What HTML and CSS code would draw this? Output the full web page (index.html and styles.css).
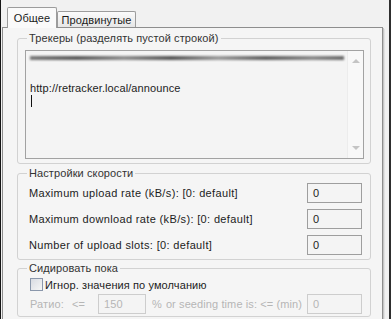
FILE: index.html
```html
<!DOCTYPE html>
<html lang="ru">
<head>
    <meta charset="UTF-8">
    <title>Настройки торрента</title>
    <link rel="stylesheet" href="styles.css">
</head>
<body>
  <div class="window">
    <!-- Tabs -->
    <div class="tabs">
      <div class="tab active">Общее</div>
      <div class="tab">Продвинутые</div>
    </div>

    <div class="panel">
      <!-- Trackers -->
      <fieldset class="group trackers">
        <legend>Трекеры (разделять пустой строкой)</legend>
        <div class="memo">
          <div class="memo-text">
            <div class="line"><span class="smudge"></span></div>
            <div class="line"></div>
            <div class="line">http://retracker.local/announce</div>
            <div class="line"><span class="caret"></span></div>
          </div>
          <div class="vscroll">
            <span class="arrow up"></span>
            <span class="arrow down"></span>
          </div>
        </div>
      </fieldset>

      <!-- Speed -->
      <fieldset class="group speed">
        <legend>Настройки скорости</legend>
        <div class="row">
          <span class="label">Maximum upload rate (kB/s): [0: default]</span>
          <span class="field">0</span>
        </div>
        <div class="row">
          <span class="label">Maximum download rate (kB/s): [0: default]</span>
          <span class="field">0</span>
        </div>
        <div class="row">
          <span class="label">Number of upload slots: [0: default]</span>
          <span class="field">0</span>
        </div>
      </fieldset>

      <!-- Seeding -->
      <fieldset class="group seed">
        <legend>Сидировать пока</legend>
        <label class="check"><span class="box"></span>Игнор. значения по умолчанию</label>
        <div class="ratio-row">
          <span class="r-label">Ратио:</span>
          <span class="r-op">&lt;=</span>
          <span class="field small">150</span>
          <span class="r-pct">%</span>
          <span class="r-time">or seeding time is: &lt;= (min)</span>
          <span class="field">0</span>
        </div>
      </fieldset>
    </div>
  </div>
</body>
</html>
```

FILE: styles.css
```css
body {
    margin: 0;
    background-color: #f1f1f1;
    font-family: "Liberation Sans", Arial, sans-serif;
    font-size: 11px;
    letter-spacing: 0.1px;
    color: #1c1c1c;
}

.window {
    width: 391px;
    height: 319px;
    box-sizing: border-box;
    overflow: hidden;
    border-left: 1px solid #151515;
    border-right: 2px solid #2e2e2e;
    padding: 7px 6px 0 1px;
}

/* Tabs */
.tabs {
    display: flex;
    align-items: flex-end;
    height: 20px;
    margin-left: 5px;
}

.tab {
    box-sizing: border-box;
    display: flex;
    align-items: center;
    justify-content: center;
    height: 16px;
    width: 79px;
    border: 1px solid #9c9c9c;
    border-bottom: none;
    border-radius: 2px 2px 0 0;
    background: linear-gradient(#fbfbfb, #e6e6e6);
}

.tab.active {
    position: relative;
    z-index: 1;
    width: 50px;
    height: 21px;
    margin-bottom: -1px;
    padding-bottom: 1px;
    background: #fafafa;
}

/* Panel */
.panel {
    height: 300px;
    border: 1px solid #8e8e8e;
    background-color: #f5f5f5;
    box-shadow: 1px 1px 0 #c6c6c6, 2px 2px 0 #e2e2e2;
    padding: 4px 11px 0 14px;
}

.group {
    margin: 0;
    min-width: 0;
    border: 1px solid #d2d2d2;
    border-radius: 3px;
}

.group legend {
    margin-left: 2px;
    padding: 0 2px;
    line-height: 13px;
    color: #333333;
}

.trackers {
    padding: 5px 6px 4px 7px;
}

.speed {
    margin-top: 3px;
    padding: 3px 8px 4px 7px;
}

.seed {
    margin-top: 2px;
    padding: 3px 8px 2px 7px;
}

/* Trackers memo */
.memo {
    display: flex;
    height: 109px;
    box-sizing: border-box;
    border: 1px solid #a2a2a2;
    background-color: #f4f4f4;
}

.memo-text {
    flex: 1;
    padding: 1px 0 0 4px;
}

.line {
    height: 13px;
    line-height: 13px;
    white-space: nowrap;
}

.smudge {
    display: block;
    width: 314px;
    height: 4px;
    margin-top: 4px;
    background: linear-gradient(to right, #7a7a7a, #5a5a5a 15%, #8e8e8e 30%, #555555 45%, #9a9a9a 60%, #5e5e5e 75%, #8a8a8a 90%, #6a6a6a);
    filter: blur(1px);
}

.caret {
    display: block;
    width: 1px;
    height: 12px;
    margin-left: 1px;
    background-color: #111111;
}

.vscroll {
    width: 15px;
    display: flex;
    flex-direction: column;
    justify-content: space-between;
    align-items: center;
    padding: 8px 0;
    background-color: #f8f8f8;
    border-left: 1px solid #ececec;
}

.arrow {
    width: 0;
    height: 0;
    border-left: 4px solid transparent;
    border-right: 4px solid transparent;
}

.arrow.up {
    border-bottom: 4px solid #c4c4c4;
}

.arrow.down {
    border-top: 4px solid #c4c4c4;
}

/* Speed rows */
.row {
    display: flex;
    align-items: center;
    justify-content: space-between;
    height: 20px;
    margin-bottom: 6px;
}

.row:last-child {
    margin-bottom: 0;
}

.label {
    padding-left: 4px;
    letter-spacing: 0.35px;
}

.field {
    box-sizing: border-box;
    width: 55px;
    height: 20px;
    line-height: 18px;
    padding-left: 5px;
    border: 1px solid #9e9e9e;
    background-color: #f4f4f4;
}

/* Seeding */
.check {
    display: flex;
    align-items: center;
    height: 13px;
    padding-left: 5px;
}

.box {
    box-sizing: border-box;
    width: 13px;
    height: 13px;
    margin-right: 2px;
    border: 1px solid #8a97ab;
    background: linear-gradient(135deg, #d8dbe2, #f6f6f6);
}

.ratio-row {
    display: flex;
    align-items: center;
    height: 20px;
    margin-top: 3px;
    padding-left: 5px;
    color: #b6b6b6;
}

.r-label {
    width: 42px;
}

.r-op {
    width: 26px;
}

.r-pct {
    margin-left: 6px;
}

.r-time {
    margin-left: 4px;
}

.ratio-row .field {
    border-color: #cdcdcd;
    color: #b6b6b6;
}

.ratio-row .field:last-child {
    margin-left: auto;
}

.field.small {
    width: 48px;
}
```
